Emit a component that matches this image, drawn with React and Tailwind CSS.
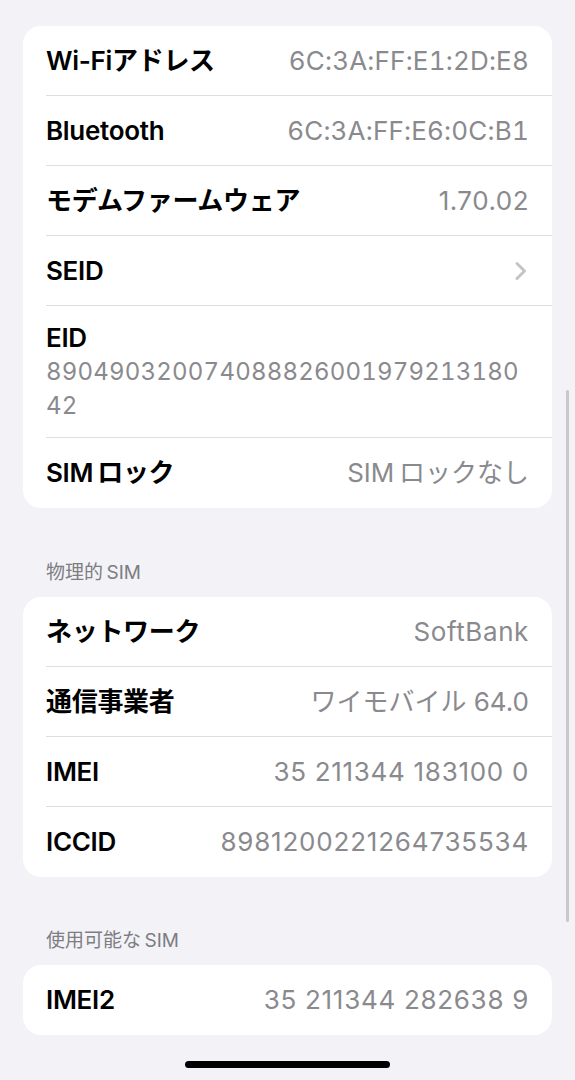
import React from "react";

const FONT = { fontFamily: "Inter, 'Noto Sans CJK JP', sans-serif" };

function Row({ label, value, chevron, last, mono, cls }) {
  return (
    <div className="pl-[23px]">
      <div className={"flex h-[70px] items-center justify-between pr-[23px] " + (last ? "" : "border-b border-[#dedee1]")}>
        <span className="text-[26px] font-semibold text-black leading-[34px] tracking-[-0.3px]">{label}</span>
        {chevron ? (
          <svg width="14" height="20" viewBox="0 0 14 20" className="mr-[1px]">
            <path d="M3 2.5 L10.5 10 L3 17.5" fill="none" stroke="#c4c4c7" strokeWidth="3" strokeLinecap="round" strokeLinejoin="round" />
          </svg>
        ) : (
          <span className={"text-[26px] text-[#8a8a8e] leading-[34px] " + (cls || "")}>{value}</span>
        )}
      </div>
    </div>
  );
}

function Header({ children }) {
  return <div className="px-[46px] text-[19px] leading-[24px] text-[#7d7d82]">{children}</div>;
}

export default function App() {
  return (
    <div className="relative min-h-[1080px] w-[575px] bg-[#f2f2f7] overflow-hidden" style={FONT}>
      <div className="pt-[26px]">
        <div className="mx-[23px] rounded-[18px] bg-white overflow-hidden">
          <Row label="Wi-Fiアドレス" value="6C:3A:FF:E1:2D:E8" cls="tabular-nums tracking-[0.2px]" />
          <Row label="Bluetooth" value="6C:3A:FF:E6:0C:B1" cls="tabular-nums tracking-[0.2px]" />
          <Row label="モデムファームウェア" value="1.70.02" cls="tracking-[0.5px]" />
          <Row label="SEID" chevron />
          <div className="pl-[23px]">
            <div className="border-b border-[#dedee1] pr-[23px] pt-[15px] pb-[15px] h-[132px]">
              <div className="text-[26px] font-semibold text-black leading-[34px] tracking-[-0.3px]">EID</div>
              <div className="text-[24px] text-[#8a8a8e] leading-[34px] tabular-nums tracking-[0.2px]">
                <div>890490320074088826001979213180</div>
                <div>42</div>
              </div>
            </div>
          </div>
          <Row label={"SIM\u2009ロック"} value={"SIM\u2009ロックなし"} last />
        </div>

        <div className="mt-[53px] mb-[12px]">
          <Header>{"物理的\u2009SIM"}</Header>
        </div>
        <div className="mx-[23px] rounded-[18px] bg-white overflow-hidden">
          <Row label="ネットワーク" value="SoftBank" cls="tracking-[0.6px]" />
          <Row label="通信事業者" value="ワイモバイル 64.0" />
          <Row label="IMEI" value="35 211344 183100 0" cls="tracking-[0.7px]" />
          <Row label="ICCID" value="8981200221264735534" cls="tracking-[0.8px]" last />
        </div>

        <div className="mt-[52px] mb-[12px]">
          <Header>{"使用可能な\u2009SIM"}</Header>
        </div>
        <div className="mx-[23px] rounded-[18px] bg-white overflow-hidden">
          <Row label="IMEI2" value="35 211344 282638 9" cls="tracking-[0.7px]" last />
        </div>
      </div>

      <div className="absolute left-[566px] top-[390px] h-[532px] w-[3px] rounded-full bg-[#c9c9cc]" />
      <div className="absolute left-[185px] top-[1061px] h-[7px] w-[205px] rounded-full bg-black" />
    </div>
  );
}
